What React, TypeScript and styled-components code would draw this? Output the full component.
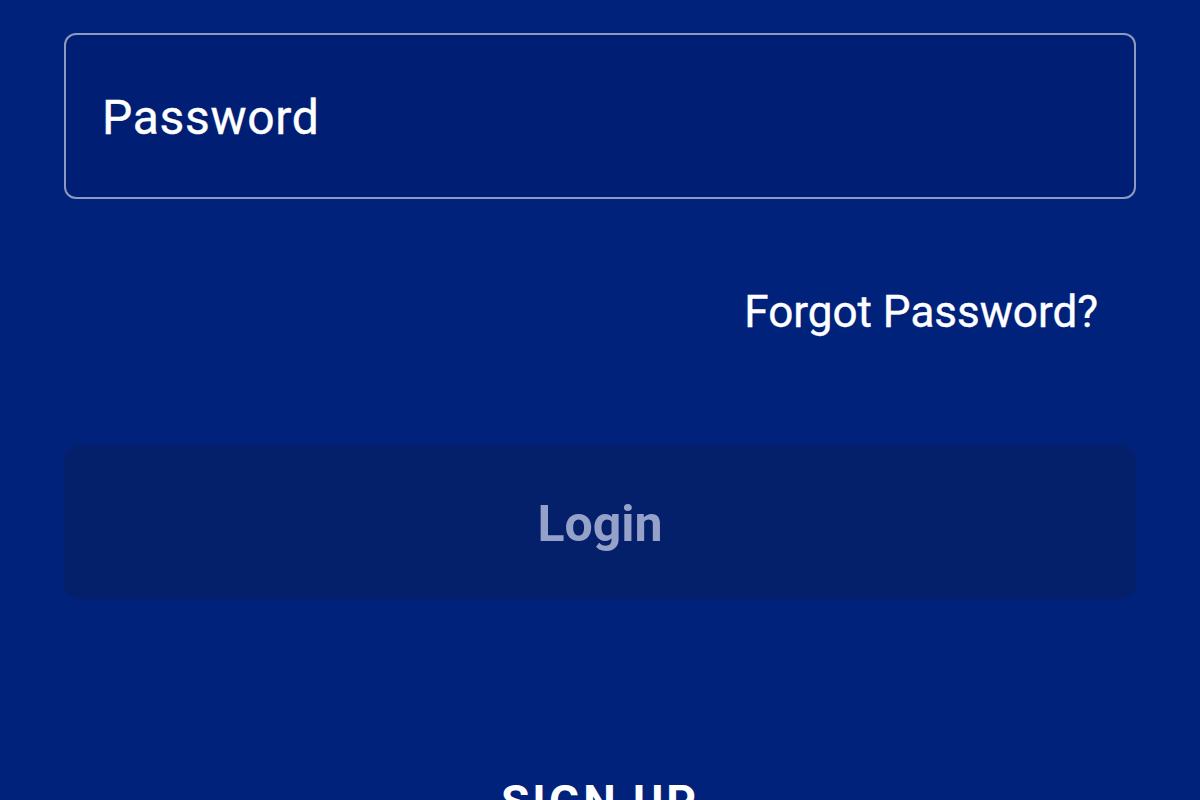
import React from "react";
import styled, { createGlobalStyle } from "styled-components";

const Global = createGlobalStyle`
  html, body { margin: 0; padding: 0; background: #00227a; }
  body { font-family: Roboto, "Noto Sans", "DejaVu Sans", sans-serif; overflow: hidden; }
  * { box-sizing: border-box; }
`;

const Page = styled.div`
  width: 1200px;
  height: 800px;
  background: #00227a;
  padding: 33px 64px 0;
  display: flex;
  flex-direction: column;
  overflow: hidden;
  & > * { flex-shrink: 0; }
`;

const Field = styled.label`
  display: flex;
  align-items: center;
  height: 166px;
  border: 2px solid rgba(255, 255, 255, 0.55);
  border-radius: 12px;
  padding: 0 36px;
  background: #001f74;
`;

const Placeholder = styled.span`
  color: #ffffff;
  font-size: 48px;
  font-weight: 400;
  letter-spacing: 0.7px;
  line-height: 1;
  margin-top: 4px;
  -webkit-text-stroke: 0.4px #ffffff;
`;

const ForgotRow = styled.div`
  display: flex;
  justify-content: flex-end;
  padding-right: 38px;
  margin-top: 91px;
`;

const ForgotLink = styled.a`
  color: #ffffff;
  font-size: 44px;
  font-weight: 400;
  line-height: 1;
  letter-spacing: 0px;
  text-decoration: none;
  -webkit-text-stroke: 0.4px #ffffff;
`;

const LoginButton = styled.button`
  margin-top: 111px;
  height: 154px;
  width: 100%;
  border: none;
  border-radius: 16px;
  background: #04206b;
  color: #95a1c8;
  font-family: inherit;
  font-size: 50px;
  font-weight: 700;
  display: flex;
  align-items: center;
  justify-content: center;
  padding: 4px 0 0;
`;

const SignUp = styled.div`
  margin-top: 180px;
  text-align: center;
  color: #ffffff;
  font-size: 46px;
  font-weight: 700;
  letter-spacing: 3px;
  line-height: 1;
`;

export default function App() {
  return (
    <>
      <Global />
      <Page>
        <Field>
          <Placeholder>Password</Placeholder>
        </Field>
        <ForgotRow>
          <ForgotLink href="#">Forgot Password?</ForgotLink>
        </ForgotRow>
        <LoginButton>Login</LoginButton>
        <SignUp>SIGN UP</SignUp>
      </Page>
    </>
  );
}
